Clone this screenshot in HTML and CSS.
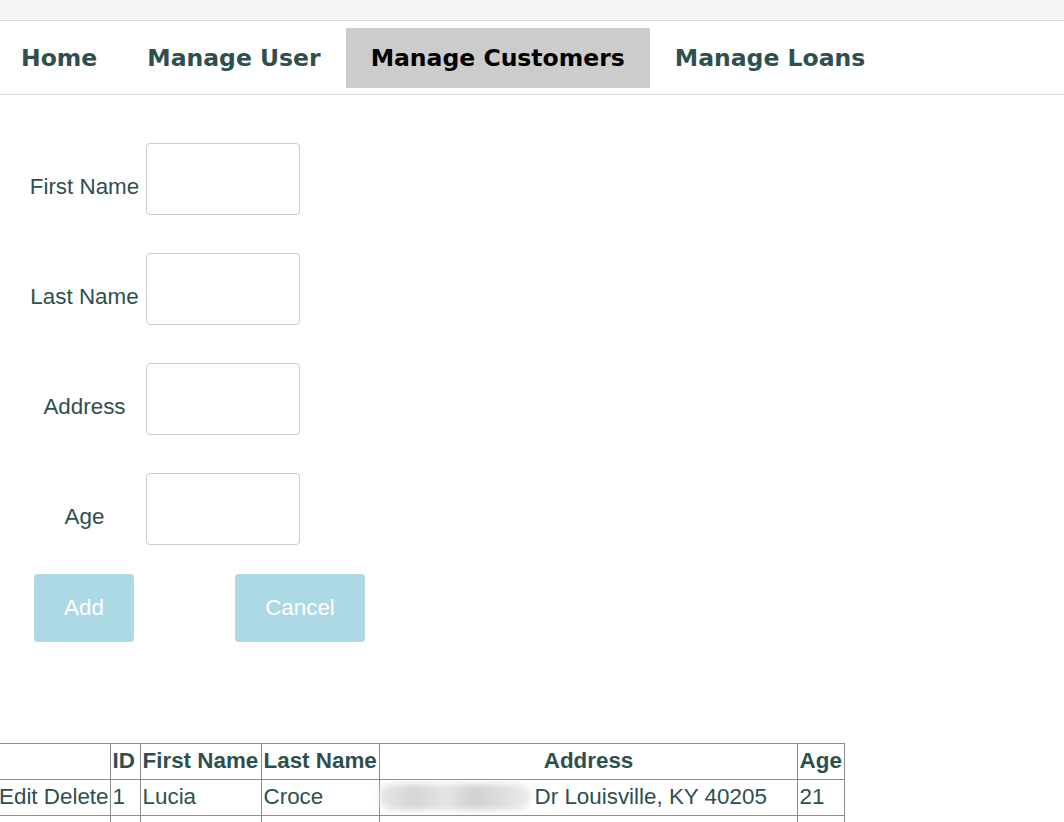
FILE: index.html
```html
<!DOCTYPE html>
<html>
<head>
<meta charset="utf-8">
<title>Manage Customers</title>
<link rel="stylesheet" href="styles.css">
</head>
<body>
<div class="topbar"></div>
<nav class="nav">
  <a class="nav-item">Home</a>
  <a class="nav-item">Manage User</a>
  <a class="nav-item active">Manage Customers</a>
  <a class="nav-item">Manage Loans</a>
</nav>
<form class="form">
  <div class="row"><label class="label">First Name</label><input class="field" type="text"></div>
  <div class="row"><label class="label">Last Name</label><input class="field" type="text"></div>
  <div class="row"><label class="label">Address</label><input class="field" type="text"></div>
  <div class="row"><label class="label">Age</label><input class="field" type="text"></div>
  <div class="buttons">
    <button type="button" class="btn btn-add">Add</button>
    <button type="button" class="btn btn-cancel">Cancel</button>
  </div>
</form>
<table class="grid">
  <colgroup>
    <col class="c-act"><col class="c-id"><col class="c-first"><col class="c-last"><col class="c-addr"><col class="c-age">
  </colgroup>
  <thead>
    <tr><th></th><th>ID</th><th>First Name</th><th>Last Name</th><th class="center">Address</th><th>Age</th></tr>
  </thead>
  <tbody>
    <tr><td>Edit Delete</td><td>1</td><td>Lucia</td><td>Croce</td><td><span class="blur"></span>Dr Louisville, KY 40205</td><td>21</td></tr>
    <tr><td>&nbsp;</td><td>&nbsp;</td><td>&nbsp;</td><td>&nbsp;</td><td>&nbsp;</td><td>&nbsp;</td></tr>
  </tbody>
</table>
</body>
</html>
```
FILE: styles.css
```css
html, body {
  margin: 0;
  padding: 0;
  background: #ffffff;
  overflow: hidden;
}
body {
  font-family: "Liberation Sans", Arial, sans-serif;
  color: #2f4f4f;
  width: 1064px;
  height: 822px;
}
.topbar {
  height: 20px;
  background: #f4f4f4;
  border-bottom: 1px solid #d9d9d9;
}
.nav {
  display: flex;
  padding: 7px 0 6px 0;
  margin-left: -4px;
  border-bottom: 1px solid #d9d9d9;
}
.nav-item {
  display: block;
  height: 60px;
  line-height: 60px;
  padding: 0 25px;
  font-family: "DejaVu Sans", Verdana, sans-serif;
  font-weight: bold;
  font-size: 23.5px;
  color: #2f4f4f;
}
.nav-item.active {
  background: #cccccc;
  color: #000000;
}
.form {
  display: flex;
  flex-direction: column;
  padding-top: 48px;
}
.row {
  display: flex;
  align-items: center;
  height: 72px;
  margin-bottom: 38px;
}
.row:nth-child(4) {
  margin-bottom: 29px;
}
.label {
  width: 123px;
  margin-left: 23px;
  text-align: center;
  font-size: 22.4px;
  padding-top: 15px;
}
.field {
  box-sizing: border-box;
  width: 154px;
  height: 72px;
  border: 1px solid #cccccc;
  border-radius: 4px;
  margin: 0;
  font-size: 20px;
}
.buttons {
  display: flex;
  padding-left: 34px;
  gap: 101px;
}
.btn {
  height: 68px;
  border: none;
  border-radius: 4px;
  background: #add8e6;
  color: #ffffff;
  font-family: "Liberation Sans", Arial, sans-serif;
  font-size: 22.4px;
  padding: 0;
}
.btn-add { width: 100px; }
.btn-cancel { width: 130px; }
.grid {
  margin-top: 101px;
  margin-left: -4px;
  border-collapse: collapse;
  font-size: 22.4px;
  color: #2f4f4f;
}
.grid th, .grid td {
  border: 1px solid #8c8c8c;
  padding: 4px 1px 5px 2px;
  text-align: left;
  white-space: nowrap;
  line-height: 26px;
  height: 26px;
}
.grid th { font-weight: bold; }
.grid th.center { text-align: center; }
.c-act { width: 113px; }
.c-id { width: 30px; }
.c-first { width: 121px; }
.c-last { width: 118px; }
.c-addr { width: 418px; }
.c-age { width: 47px; }
.blur {
  display: inline-block;
  width: 152px;
  height: 26px;
  margin: 0 4px 0 -3px;
  vertical-align: -6px;
  background: linear-gradient(90deg, #e8e8e8 0%, #d4d6d6 22%, #e4e4e4 45%, #cfd1d1 62%, #e0e2e2 85%, #ececec 100%);
  border-radius: 14px;
  filter: blur(3px);
}
```
